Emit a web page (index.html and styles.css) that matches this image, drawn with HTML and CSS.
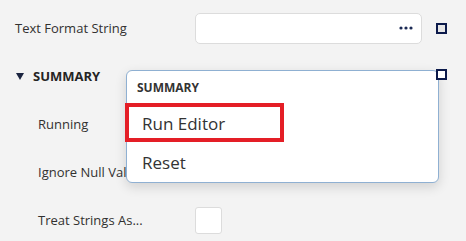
FILE: index.html
```html
<!DOCTYPE html>
<html lang="en">
<head>
    <meta charset="UTF-8">
    <meta name="viewport" content="width=device-width, initial-scale=1.0">
    <title>Properties</title>
    <link rel="stylesheet" href="styles.css">
</head>
<body>

    <div class="panel">
        <div class="row">
            <div class="label">Text Format String</div>
            <div class="value">
                <div class="text-box">
                    <svg class="dots" width="14" height="4" viewBox="0 0 14 4">
                        <circle cx="2" cy="2" r="1.6" fill="#1b2a55"/>
                        <circle cx="7" cy="2" r="1.6" fill="#1b2a55"/>
                        <circle cx="12" cy="2" r="1.6" fill="#1b2a55"/>
                    </svg>
                </div>
            </div>
            <div class="mark"></div>
        </div>

        <div class="row">
            <div class="label section">
                <svg class="caret" width="8" height="7" viewBox="0 0 8 7"><path d="M0 0H8L4 7Z" fill="#1b2540"/></svg>SUMMARY
            </div>
            <div class="value"></div>
            <div class="mark mark-top"></div>
        </div>

        <div class="row">
            <div class="label sub">Running</div>
            <div class="value"></div>
            <div></div>
        </div>

        <div class="row">
            <div class="label sub">Ignore Null Values</div>
            <div class="value"></div>
            <div></div>
        </div>

        <div class="row">
            <div class="label sub">Treat Strings As...</div>
            <div class="value">
                <div class="check-box"></div>
            </div>
            <div></div>
        </div>

        <!-- context menu opened from the SUMMARY row -->
        <div class="menu">
            <div class="menu-title">SUMMARY</div>
            <div class="menu-item">Run Editor</div>
            <div class="menu-item">Reset</div>
            <div class="highlight"></div>
        </div>
    </div>

</body>
</html>
```

FILE: styles.css
```css
body {
    margin: 0;
    background: #f3f3f3;
    font-family: "Open Sans", "Noto Sans", sans-serif;
    color: #323130;
}
.panel {
    position: relative;
    width: 466px;
    height: 241px;
    padding-top: 4px;
    box-sizing: border-box;
    overflow: hidden;
}
.row {
    display: grid;
    grid-template-columns: 195px 227px 24px;
    height: 48px;
    align-items: center;
}
.label {
    padding-left: 15px;
    font-size: 13px;
    white-space: nowrap;
    overflow: hidden;
}
.label.sub {
    padding-left: 38px;
}
.section {
    padding-left: 16px;
    font-weight: bold;
    font-size: 13px;
    color: #252423;
    display: flex;
    align-items: center;
}
.caret {
    margin-right: 9px;
}
.text-box {
    height: 29px;
    background: white;
    border: 1px solid #dcdcdc;
    border-radius: 5px;
    display: flex;
    justify-content: flex-end;
    align-items: center;
    padding-right: 8px;
}
.check-box {
    width: 25px;
    height: 25px;
    background: white;
    border: 1px solid #dcdcdc;
    border-radius: 3px;
}
.mark {
    width: 7px;
    height: 7px;
    margin-left: 14px;
    border: 2px solid #0c1a4b;
    background: #e6e6e6;
}
.mark-top {
    position: relative;
    z-index: 2;
    top: -2px;
    background: white;
}
.menu {
    position: absolute;
    left: 126px;
    top: 70px;
    width: 311px;
    height: 111px;
    background: white;
    border: 1px solid #8fb0d2;
    border-radius: 6px;
    box-shadow: 0 4px 12px rgba(0, 0, 0, 0.14);
    z-index: 1;
}
.menu-title {
    padding: 8px 0 0 10px;
    height: 25px;
    font-size: 12px;
    font-weight: bold;
    color: #333;
}
.menu-item {
    height: 39px;
    line-height: 39px;
    padding-left: 15px;
    font-size: 17px;
    color: #333;
}
.highlight {
    position: absolute;
    left: -2px;
    top: 32px;
    width: 151px;
    height: 31px;
    border: 4px solid #e41e26;
}
```
